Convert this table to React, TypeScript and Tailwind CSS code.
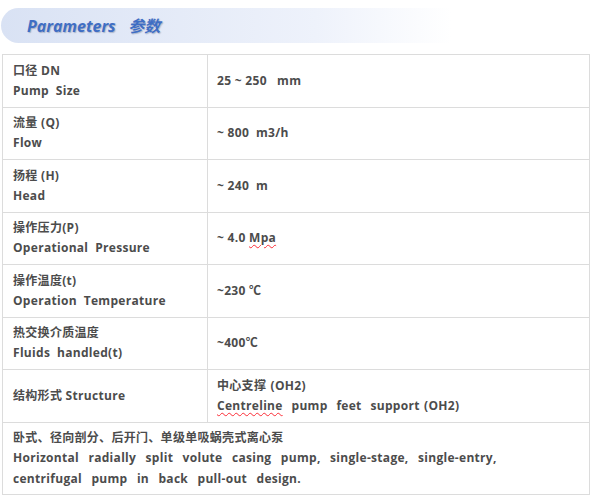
import React from "react";

const rows: { label: string[]; value: React.ReactNode }[] = [
  { label: ["口径 DN", "Pump  Size"], value: "25 ~ 250   mm" },
  { label: ["流量 (Q)", "Flow"], value: "~ 800  m3/h" },
  { label: ["扬程 (H)", "Head"], value: "~ 240  m" },
  {
    label: ["操作压力(P)", "Operational  Pressure"],
    value: (
      <>
        ~ 4.0{" "}
        <span className="underline decoration-wavy decoration-red-500 decoration-1 underline-offset-2">Mpa</span>
      </>
    ),
  },
  { label: ["操作温度(t)", "Operation  Temperature"], value: "~230 ℃" },
  { label: ["热交换介质温度", "Fluids  handled(t)"], value: "~400℃" },
];

export default function App() {
  return (
    <div
      className="w-[594px] h-[499px] bg-white pt-[8px] text-[12px] font-bold text-[#4c4c4c]"
      style={{ fontFamily: '"Open Sans", "Noto Sans CJK SC", sans-serif' }}
    >
      <div className="ml-[1px] w-[450px] h-[35px] rounded-l-[18px] bg-gradient-to-r from-[#d9e2f4] via-[#eef2fb] via-70% to-white flex items-center pl-[26px]">
        <span
          className="italic font-bold text-[16px] text-[#3f6ec4]"
          style={{ textShadow: "1px 1px 1px rgba(80,90,120,0.35)" }}
        >
          Parameters&nbsp;&nbsp;&nbsp;参数
        </span>
      </div>
      <div className="mt-[11px] ml-[2px] w-[588px] border border-[#dcdcdc]">
        {rows.map((r, i) => (
          <div key={i} className="flex h-[52.5px] border-b border-[#dcdcdc]">
            <div className="w-[205px] border-r border-[#dcdcdc] pl-[10px] flex flex-col justify-center leading-[20px] whitespace-pre tracking-[0.3px]">
              <div>{r.label[0]}</div>
              <div>{r.label[1]}</div>
            </div>
            <div className="flex-1 pl-[9px] flex items-center whitespace-pre tracking-[0.3px]">{r.value}</div>
          </div>
        ))}
        <div className="flex h-[52.5px] border-b border-[#dcdcdc]">
          <div className="w-[205px] border-r border-[#dcdcdc] pl-[10px] flex items-center whitespace-pre tracking-[0.3px]">
            结构形式 Structure
          </div>
          <div className="flex-1 pl-[9px] flex flex-col justify-center leading-[20px] whitespace-pre tracking-[0.3px] [word-spacing:1px]">
            <div>中心支撑 (OH2)</div>
            <div>
              <span className="underline decoration-wavy decoration-red-500 decoration-1 underline-offset-2">Centreline</span>
              {"  pump  feet  support (OH2)"}
            </div>
          </div>
        </div>
        <div className="h-[71px] pl-[10px] pt-[5px] leading-[20.5px] tracking-[0.3px] [word-spacing:6px]">
          <div>卧式、径向剖分、后开门、单级单吸蜗壳式离心泵</div>
          <div>Horizontal radially split volute casing pump, single-stage, single-entry,</div>
          <div>centrifugal pump in back pull-out design.</div>
        </div>
      </div>
    </div>
  );
}
